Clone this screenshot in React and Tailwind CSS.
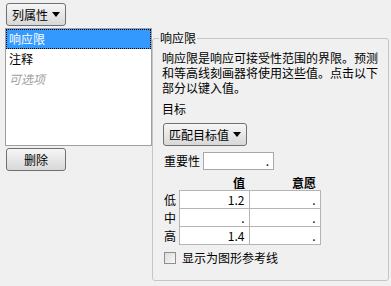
import React from "react";

function Arrow() {
    return (
        <svg width="8" height="5" viewBox="0 0 8 5" className="shrink-0">
            <path d="M0 0h8L4 5z" fill="#000" />
        </svg>
    );
}

function DropButton({ label, className }) {
    return (
        <button
            className={`flex items-center justify-between whitespace-nowrap pl-[5px] pr-[5px] h-[23px] rounded-[3px] border border-[#707070] bg-gradient-to-b from-[#f6f6f6] to-[#d8d8d8] text-[12px] text-black ${className}`}
        >
            <span>{label}</span>
            <Arrow />
        </button>
    );
}

export default function App() {
    const rows = [
        { label: "低", value: "1.2", desire: "." },
        { label: "中", value: ".", desire: "." },
        { label: "高", value: "1.4", desire: "." },
    ];

    return (
        <div className="w-[391px] h-[286px] bg-[#f0f0f0] text-[12px] text-black font-['Noto_Sans_CJK_SC','Noto_Sans',sans-serif] overflow-hidden">
            {/* Column properties menu */}
            <div className="pt-[3px] pl-[6px]">
                <DropButton label="列属性" className="w-[60px]" />
            </div>

            <div className="flex mt-[2px]">
                {/* Property list */}
                <div className="ml-[5px] w-[147px]">
                    <div className="h-[118px] border border-[#a0a0a0] bg-white">
                        <div className="h-[20px] leading-[18px] px-[2px] bg-[#3399ff] text-white border border-dotted border-black">
                            响应限
                        </div>
                        <div className="h-[20px] leading-[20px] px-[3px]">注释</div>
                        <div className="h-[20px] leading-[20px] px-[3px] italic text-[#a0a0a0]">可选项</div>
                    </div>
                    <button className="mt-[2px] ml-[1px] w-[60px] h-[23px] rounded-[3px] border border-[#707070] bg-gradient-to-b from-[#f6f6f6] to-[#d8d8d8] text-[12px]">
                        删除
                    </button>
                </div>

                {/* Response limits group */}
                <fieldset className="mt-[2px] w-[234px] h-[251px] border border-[#c6c6c6] rounded-[3px] pl-[9px] pr-[6px]">
                    <legend className="ml-[-3px] px-[1px] leading-[16px]">响应限</legend>
                    <p className="mt-[4px] w-[220px] leading-[15px]">
                        响应限是响应可接受性范围的界限。预测和等高线刻画器将使用这些值。点击以下部分以键入值。
                    </p>
                    <div className="mt-[6px] leading-[15px]">目标</div>
                    <DropButton label="匹配目标值" className="mt-[7px] ml-[1px] w-[84px]" />

                    <div className="mt-[6px] ml-[2px] flex items-center gap-[3px]">
                        <span className="w-[36px]">重要性</span>
                        <div className="w-[71px] h-[18px] border border-[#a8a8a8] bg-white text-right pr-[4px] leading-[16px]">.</div>
                    </div>

                    <table className="mt-[6px] ml-[2px] border-collapse">
                        <thead>
                            <tr className="h-[14px] leading-[14px] font-bold">
                                <th className="w-[15px] p-0"></th>
                                <th className="w-[70px] p-0 pr-[4px] text-right">值</th>
                                <th className="w-[71px] p-0 pr-[4px] text-right">意愿</th>
                            </tr>
                        </thead>
                        <tbody>
                            {rows.map((r) => (
                                <tr key={r.label} className="h-[18px] leading-[16px]">
                                    <td className="p-0 text-left">{r.label}</td>
                                    <td className="p-0 pr-[4px] text-right bg-white border border-[#b4b4b4]">{r.value}</td>
                                    <td className="p-0 pr-[4px] text-right bg-white border border-[#b4b4b4]">{r.desire}</td>
                                </tr>
                            ))}
                        </tbody>
                    </table>

                    <label className="mt-[6px] ml-[2px] flex items-center gap-[6px]">
                        <span className="w-[12px] h-[12px] border border-[#8e8f8f] bg-gradient-to-br from-[#dcdcdc] to-[#f8f8f8]"></span>
                        <span className="leading-[14px]">显示为图形参考线</span>
                    </label>
                </fieldset>
            </div>
        </div>
    );
}
